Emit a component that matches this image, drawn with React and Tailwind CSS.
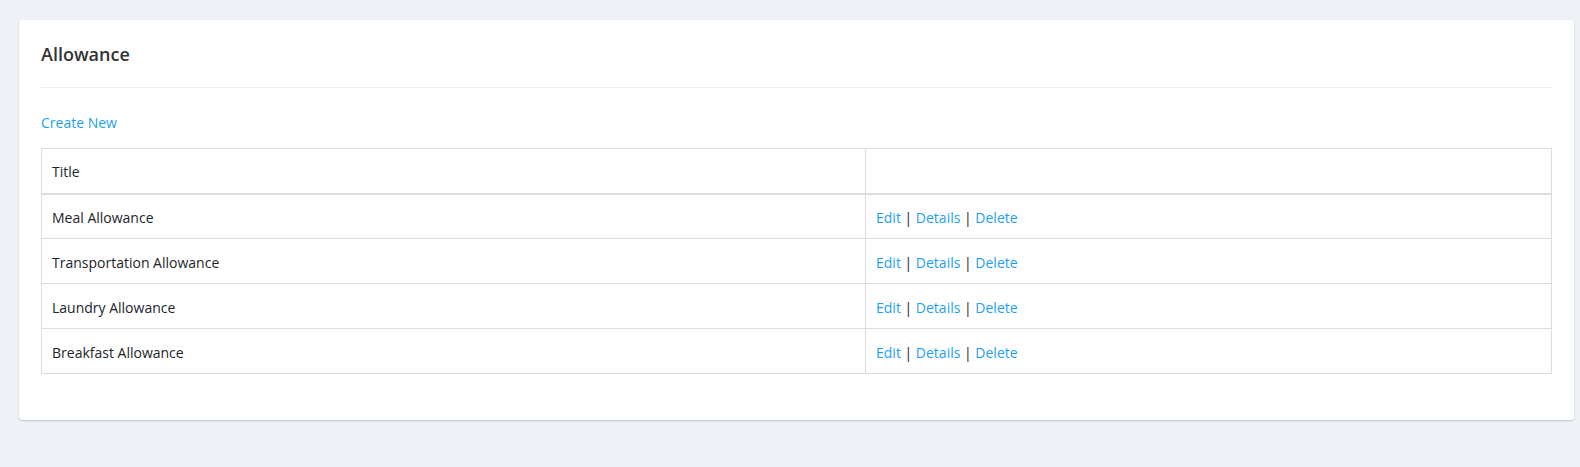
export default function App() {
    const rows = ['Meal Allowance', 'Transportation Allowance', 'Laundry Allowance', 'Breakfast Allowance']

    return (
        <div className="min-h-[467px] bg-[#eef1f5] pl-[19px] pr-[6px] pt-5 pb-[47px] text-[14px] text-[#212529]" style={{ fontFamily: '"Open Sans", sans-serif' }}>
            <div className="rounded-[4px] bg-white px-[22px] pb-[46px] shadow-[0_1px_2px_rgba(0,0,0,0.2)]">
                <div className="flex h-[68px] items-center border-b border-[#eceef1] pt-[2px]">
                    <h4 className="text-[18px] font-semibold text-[#333]">Allowance</h4>
                </div>
                <div className="flex h-[60px] items-center pt-[9px]">
                    <a href="#" className="text-[#1e9ff2]">Create New</a>
                </div>
                <table className="w-full border-collapse border border-[#ddd]">
                    <thead>
                        <tr className="h-[45px] border-b-2 border-[#ddd]">
                            <th className="w-[824px] border-r border-[#ddd] px-[10px] pt-[2px] text-left font-normal">Title</th>
                            <th className="px-[10px]"></th>
                        </tr>
                    </thead>
                    <tbody>
                        {rows.map((r) => (
                            <tr key={r} className="h-[45px] border-b border-[#ddd]">
                                <td className="border-r border-[#ddd] px-[10px] pt-[2px]">{r}</td>
                                <td className="px-[10px] pt-[2px]">
                                    <a href="#" className="text-[#1e9ff2]">Edit</a> | <a href="#" className="text-[#1e9ff2]">Details</a> | <a href="#" className="text-[#1e9ff2]">Delete</a>
                                </td>
                            </tr>
                        ))}
                    </tbody>
                </table>
            </div>
        </div>
    )
}
